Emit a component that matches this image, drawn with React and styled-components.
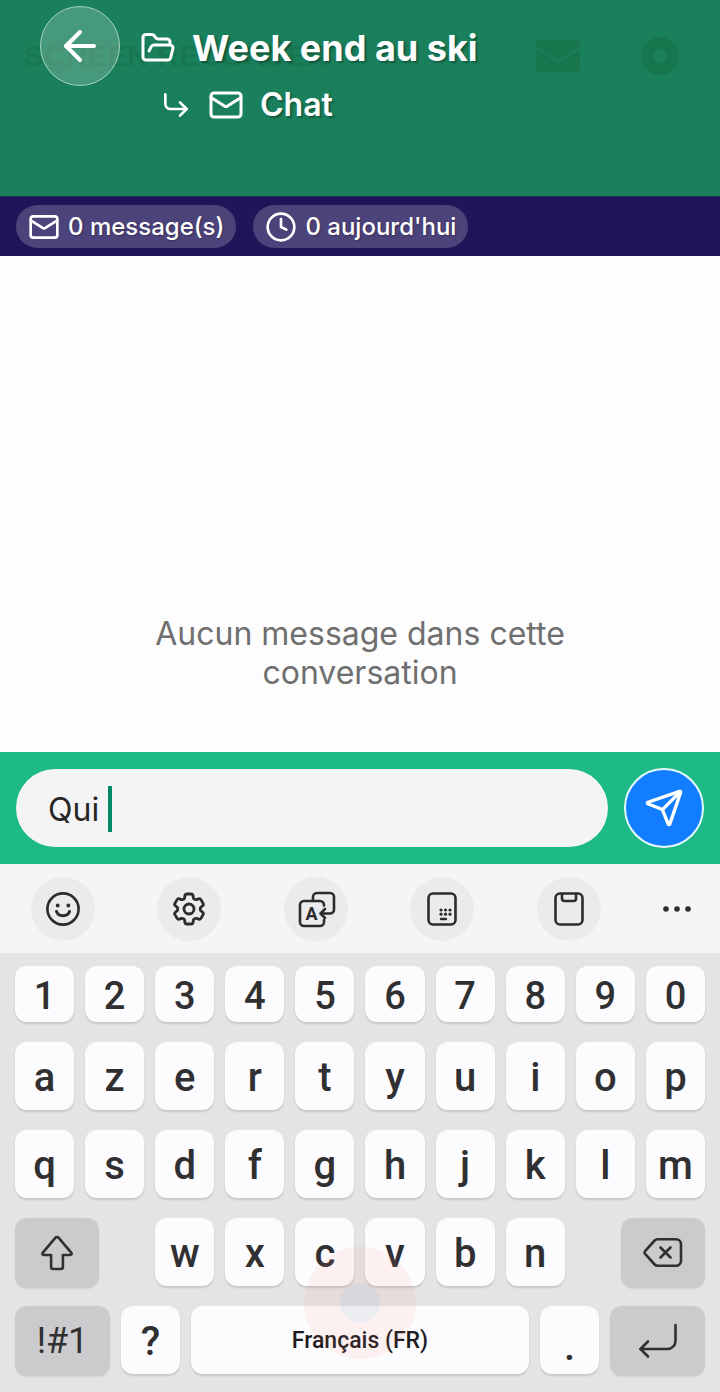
import React, { useState } from 'react'
import styled, { createGlobalStyle, css } from 'styled-components'
import { ArrowLeft, Clock, CornerDownRight, FolderOpen, Mail, Send } from 'lucide-react'
import { HiOutlineCog6Tooth } from 'react-icons/hi2'

const GlobalStyle = createGlobalStyle`
	* {
		box-sizing: border-box;
	}
	body {
		margin: 0;
		background: #fdfdfd;
		font-family: Inter, 'Noto Sans', sans-serif;
	}
	button, input {
		margin: 0;
		padding: 0;
		border: none;
		font: inherit;
		color: inherit;
		background: none;
	}
	svg {
		display: block;
		flex: none;
	}
`

const Screen = styled.div`
	display: flex;
	flex-direction: column;
	min-height: 100vh;
`

/* header */

const Header = styled.header`
	position: relative;
	isolation: isolate;
	display: flex;
	gap: 20px;
	min-height: 197px;
	padding: 6px 40px;
	color: #fff;
	background: #1a805c;
	border-bottom: 1px solid #14304f;
`

const BackButton = styled.button`
	display: flex;
	flex: none;
	align-items: center;
	justify-content: center;
	width: 80px;
	height: 80px;
	border: 1px solid #a5d3c0;
	border-radius: 50%;
	background: rgba(255, 255, 255, 0.2);
`

const Heading = styled.div`
	display: flex;
	flex-direction: column;
	gap: 12px;
	padding-top: 20px;
	text-shadow: 2px 2px 2px rgba(0, 0, 0, 0.3);
`

const Title = styled.h1`
	display: flex;
	align-items: center;
	gap: 16px;
	margin: 0;
	font-size: 36px;
	line-height: 44px;
	font-weight: 700;
`

const Subtitle = styled.h2`
	display: flex;
	align-items: center;
	gap: 16px;
	margin: 0;
	padding-left: 20px;
	font-size: 32px;
	line-height: 46px;
	font-weight: 600;
`

const Watermark = styled.div`
	position: absolute;
	z-index: -1;
	top: 32px;
	left: 24px;
	right: 40px;
	display: flex;
	align-items: center;
	justify-content: space-between;
	color: rgba(20, 80, 30, 0.2);
	font: 700 30px/48px 'Liberation Sans', sans-serif;
	pointer-events: none;
`

const WatermarkIcons = styled.div`
	display: flex;
	align-items: center;
	gap: 60px;
`

/* stats */

const Stats = styled.div`
	display: flex;
	gap: 17px;
	padding: 8px 16px;
	background: #21155a;
`

const Pill = styled.div`
	display: flex;
	align-items: center;
	gap: 8px;
	height: 43px;
	padding: 0 12px;
	border-radius: 22px;
	color: #fff;
	font-size: 24px;
	font-weight: 500;
	text-shadow: 1px 1px 2px rgba(0, 0, 0, 0.3);
	background: rgba(255, 255, 255, 0.2);
`

/* conversation */

const Messages = styled.main`
	display: flex;
	flex: 1;
	align-items: flex-end;
	justify-content: center;
	padding: 0 140px 60px;
`

const Empty = styled.p`
	margin: 0;
	color: #6f6f6f;
	font-size: 32px;
	line-height: 39px;
	text-align: center;
`

const Composer = styled.form`
	display: flex;
	align-items: center;
	gap: 16px;
	padding: 16px;
	background: #1dba87;
`

const Field = styled.label`
	display: flex;
	flex: 1;
	align-items: center;
	height: 78px;
	padding: 2px 32px 0;
	border-radius: 39px;
	background: #f4f4f4;
`

const MessageInput = styled.input`
	field-sizing: content;
	max-width: 100%;
	color: #262626;
	font-size: 32px;
	outline: none;
	caret-color: transparent;
`

const Caret = styled.span`
	width: 4px;
	height: 46px;
	background: #008a6a;
`

const SendButton = styled.button`
	display: flex;
	align-items: center;
	justify-content: center;
	width: 80px;
	height: 80px;
	border: 2px solid #e6fbff;
	border-radius: 50%;
	color: #fff;
	background: #127dff;
`

/* keyboard */

const Toolbar = styled.div`
	display: flex;
	align-items: center;
	justify-content: space-between;
	height: 89px;
	padding: 0 29px 0 31px;
	color: #2c2c2e;
	background: #f5f5f8;
`

const Tool = styled.button`
	display: flex;
	align-items: center;
	justify-content: center;
	width: ${(props) => (props.$plain ? '28px' : '64px')};
	height: 64px;
	border-radius: 50%;
	background: ${(props) => (props.$plain ? 'none' : '#ebebed')};
`

const Keyboard = styled.div`
	position: relative;
	display: flex;
	flex-direction: column;
	gap: 20px;
	padding: 13px 15px 18px;
	color: #303032;
	background: #e4e4e6;
	font-family: Roboto, 'Noto Sans', sans-serif;
`

const KeyRow = styled.div`
	display: grid;
	grid-template-columns: ${(props) => props.$columns || 'repeat(10, 1fr)'};
	gap: 11px;
`

const Key = styled.button`
	display: flex;
	align-items: center;
	justify-content: center;
	height: 68px;
	padding-top: 2px;
	border-radius: 12px;
	font-size: 40px;
	font-weight: 500;
	background: #fcfcfe;
	box-shadow: 0 2px 2px rgba(0, 0, 0, 0.12);
	${(props) => props.$short && css`
		height: 56px;
		padding-top: 4px;
		font-size: 38px;
	`}
	${(props) => props.$dot && css`
		padding-top: 12px;
	`}
`

const SpaceKey = styled(Key)`
	padding-top: 0;
	color: #1c1c1e;
	font-size: 23px;
`

const DarkKey = styled(Key)`
	height: 70px;
	margin-bottom: -2px;
	padding-top: 0;
	font-size: 36px;
	font-weight: 400;
	background: #cbcbcd;
	box-shadow: 0 1px 2px rgba(0, 0, 0, 0.08);
`

const SideKey = styled(DarkKey)`
	grid-column: span 2;
	justify-self: ${(props) => props.$side};
	width: 65%;
`

const TouchRing = styled.div`
	position: absolute;
	left: 50%;
	bottom: 33px;
	width: 112px;
	height: 112px;
	margin-left: -56px;
	border: 36px solid rgba(255, 120, 100, 0.09);
	border-radius: 50%;
	background: rgba(120, 130, 140, 0.12);
	background-clip: padding-box;
	pointer-events: none;
`

const strokes = {
	fill: 'none',
	stroke: 'currentColor',
	strokeWidth: 2.6,
	strokeLinecap: 'round',
	strokeLinejoin: 'round',
}

const SmileIcon = () => (
	<svg width="40" height="40" {...strokes}>
		<circle cx="20" cy="20" r="15.6" />
		<circle cx="14.7" cy="16.5" r="1.9" fill="currentColor" stroke="none" />
		<circle cx="25.3" cy="16.5" r="1.9" fill="currentColor" stroke="none" />
		<path d="M13.5 22.500c2 5.600 11 5.600 13 0" strokeWidth="3" />
	</svg>
)

const TranslateIcon = () => (
	<svg width="40" height="40" {...strokes}>
		<path d="M28 16.5V16a4 4 0 0 0-4-4H8a4 4 0 0 0-4 4v17a4 4 0 0 0 4 4h16a4 4 0 0 0 4-4v-2" />
		<path d="M17 11.5V8a4 4 0 0 1 4-4h13a4 4 0 0 1 4 4v12.500a4 4 0 0 1-4 4h-9" />
		<path d="m29 20-4.500 4.500L29 29" />
		<text x="15.5" y="31" textAnchor="middle" fontFamily="Roboto, sans-serif" fontSize="18" fontWeight="700" fill="currentColor" stroke="none">A</text>
	</svg>
)

const KeypadIcon = () => (
	<svg width="40" height="40" {...strokes}>
		<rect x="6.5" y="4.5" width="27" height="31" rx="4.500" />
		{[21, 25.2].map((y) => [19, 23.500, 28].map((x) => (
			<circle key={`${x}-${y}`} cx={x} cy={y} r="1.6" fill="currentColor" stroke="none" />
		)))}
		<path d="M19 30h5" strokeWidth="2.4" />
	</svg>
)

const ClipboardIcon = () => (
	<svg width="40" height="40" {...strokes}>
		<rect x="6.5" y="4.5" width="27" height="31" rx="4.5" />
		<path d="M13 5v4.500a2.500 2.500 0 0 0 2.500 2.500h9A2.500 2.500 0 0 0 27 9.500V5" />
	</svg>
)

const MoreIcon = () => (
	<svg width="28" height="8" fill="currentColor">
		<circle cx="3" cy="4" r="2.8" />
		<circle cx="14" cy="4" r="2.8" />
		<circle cx="25" cy="4" r="2.8" />
	</svg>
)

const ShiftIcon = () => (
	<svg width="36" height="36" {...strokes}>
		<path d="M16.3 2.800 3.800 17.600c-1 1.200-.3 2.400 1 2.400h7.300v12a2 2 0 0 0 2 2h7.800a2 2 0 0 0 2-2V20h7.300c1.300 0 2-1.200 1-2.400L19.700 2.800a2.300 2.300 0 0 0-3.400 0z" />
	</svg>
)

const BackspaceIcon = () => (
	<svg width="40" height="32" {...strokes}>
		<path d="M14.5 2.300H33a5 5 0 0 1 5 5v16.400a5 5 0 0 1-5 5H14.500a4 4 0 0 1-2.800-1.200L2.300 17.200a2.400 2.400 0 0 1 0-3.400l9.400-10.300a4 4 0 0 1 2.800-1.200z" />
		<path d="m17.500 10.500 10 10m0-10-10 10" />
	</svg>
)

const EnterIcon = () => (
	<svg width="40" height="36" {...strokes}>
		<path d="M37.500 2v16a8 8 0 0 1-8 8H2.500" />
		<path d="m10 18.500-7.500 7.500 7.500 7.500" />
	</svg>
)

const OldGear = () => (
	<svg width="40" height="40" viewBox="0 0 40 40" fill="none" stroke="currentColor">
		<circle cx="20" cy="20" r="13" strokeWidth="12" />
	</svg>
)

const OldMail = () => (
	<svg width="44" height="32" viewBox="0 0 44 32" fill="currentColor">
		<path d="M2 0h40a2 2 0 0 1 2 2v5L22 20 0 7V2a2 2 0 0 1 2-2z" />
		<path d="M0 9 22 22 44 9v21a2 2 0 0 1-2 2H2a2 2 0 0 1-2-2z" />
	</svg>
)

const App = () => {
	const [message, setMessage] = useState('Qui ')

	const type = (letter) => setMessage(message + letter)

	const keys = (letters, short) => letters.split('').map((letter) => (
		<Key key={letter} type="button" $short={short} onClick={() => type(letter)}>{letter}</Key>
	))

	return (
		<Screen>
			<GlobalStyle />
			<Header>
				<Watermark aria-hidden="true">
					<span>SCREEN RECORDER</span>
					<WatermarkIcons>
						<OldMail />
						<OldGear />
					</WatermarkIcons>
				</Watermark>
				<BackButton type="button" aria-label="Retour">
					<ArrowLeft size={48} />
				</BackButton>
				<Heading>
					<Title>
						<FolderOpen size={36} />
						Week end au ski
					</Title>
					<Subtitle>
						<CornerDownRight size={32} />
						<Mail size={36} />
						Chat
					</Subtitle>
				</Heading>
			</Header>
			<Stats>
				<Pill>
					<Mail size={32} />
					0 message(s)
				</Pill>
				<Pill>
					<Clock size={32} />
					0 aujourd&apos;hui
				</Pill>
			</Stats>
			<Messages>
				<Empty>Aucun message dans cette conversation</Empty>
			</Messages>
			<Composer onSubmit={(e) => e.preventDefault()}>
				<Field>
					<MessageInput aria-label="Message" value={message} onChange={(e) => setMessage(e.target.value)} />
					<Caret />
				</Field>
				<SendButton type="submit" aria-label="Envoyer">
					<Send size={40} />
				</SendButton>
			</Composer>
			<Toolbar>
				<Tool type="button" aria-label="Emojis"><SmileIcon /></Tool>
				<Tool type="button" aria-label="Paramètres"><HiOutlineCog6Tooth size={40} strokeWidth={1.7} /></Tool>
				<Tool type="button" aria-label="Traduire"><TranslateIcon /></Tool>
				<Tool type="button" aria-label="Modes du clavier"><KeypadIcon /></Tool>
				<Tool type="button" aria-label="Presse-papiers"><ClipboardIcon /></Tool>
				<Tool type="button" aria-label="Plus" $plain><MoreIcon /></Tool>
			</Toolbar>
			<Keyboard>
				<KeyRow>{keys('1234567890', true)}</KeyRow>
				<KeyRow>{keys('azertyuiop')}</KeyRow>
				<KeyRow>{keys('qsdfghjklm')}</KeyRow>
				<KeyRow>
					<SideKey type="button" aria-label="Majuscule" $side="start"><ShiftIcon /></SideKey>
					{keys('wxcvbn')}
					<SideKey type="button" aria-label="Effacer" $side="end" onClick={() => setMessage(message.slice(0, -1))}>
						<BackspaceIcon />
					</SideKey>
				</KeyRow>
				<KeyRow $columns="95px 59px 1fr 59px 95px">
					<DarkKey type="button">!#1</DarkKey>
					<Key type="button" onClick={() => type('?')}>?</Key>
					<SpaceKey type="button" onClick={() => type(' ')}>Français (FR)</SpaceKey>
					<Key type="button" $dot onClick={() => type('.')}>.</Key>
					<DarkKey type="button" aria-label="Entrée"><EnterIcon /></DarkKey>
				</KeyRow>
				<TouchRing />
			</Keyboard>
		</Screen>
	)
}

export default App
